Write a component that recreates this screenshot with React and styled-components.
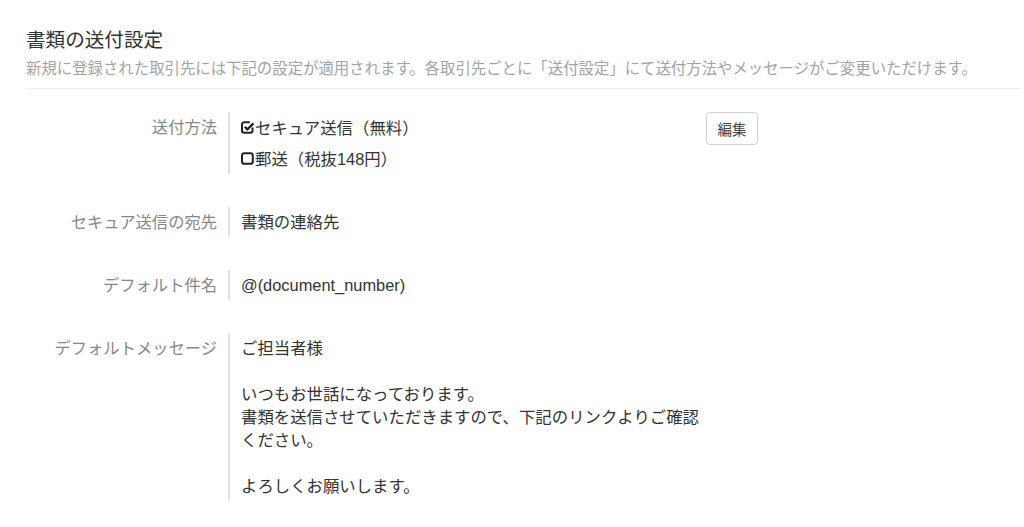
import React from "react";
import styled, { createGlobalStyle } from "styled-components";

const Global = createGlobalStyle`
  body {
    margin: 0;
    background: #fff;
    font-family: "Liberation Sans", "Noto Sans CJK JP", sans-serif;
    color: #333;
  }
`;

const Page = styled.div`
  padding: 28px 4px 0 26px;
`;

const Title = styled.div`
  font-size: 19.6px;
  line-height: 24px;
  color: #333;
`;

const Subtitle = styled.div`
  font-size: 15.4px;
  line-height: 22px;
  margin-top: 6px;
  color: #a3a3a3;
  white-space: nowrap;
`;

const Divider = styled.div`
  margin-top: 8px;
  border-top: 1px solid #ececec;
`;

const Rows = styled.div`
  display: flex;
  flex-direction: column;
  gap: 33px;
  margin-top: 23px;
`;

const Row = styled.div`
  display: grid;
  grid-template-columns: 204px 476px auto;
  align-items: start;
`;

const Label = styled.div`
  font-size: 16.3px;
  line-height: 30px;
  color: #888;
  text-align: right;
  padding-right: 11px;
  border-right: 2px solid #e2e2e2;
  height: ${(p) => p.$h}px;
  box-sizing: border-box;
  white-space: nowrap;
`;

const Content = styled.div`
  font-size: 16.4px;
  line-height: ${(p) => p.$lh || 30}px;
  padding: ${(p) => p.$pt || 0}px 0 0 11px;
  color: #333;
`;

const Option = styled.div`
  display: flex;
  align-items: center;
  height: 31px;
  gap: 1px;
`;

const Message = styled.div`
  white-space: pre;
`;

const EditButton = styled.button`
  width: 52px;
  height: 33px;
  border: 1px solid #d0d0d0;
  border-radius: 4px;
  background: #fff;
  font-family: "Liberation Sans", "Noto Sans CJK JP", sans-serif;
  font-size: 14.5px;
  color: #444;
  padding: 0;
  cursor: pointer;
`;

const CheckIcon = ({ checked }) => (
  <svg width="13" height="13" viewBox="0 0 13 13" fill="none">
    {checked ? (
      <>
        <path
          d="M11.5 6.5V9.6a2.2 2.2 0 0 1-2.2 2.2H3.2a2.2 2.2 0 0 1-2.2-2.2V3.4a2.2 2.2 0 0 1 2.2-2.2H8.8"
          stroke="#222"
          strokeWidth="2"
        />
        <path d="M3.8 5.8l2.6 2.6L12.4 2.4" stroke="#222" strokeWidth="2.3" />
      </>
    ) : (
      <rect
        x="1"
        y="1.2"
        width="10.8"
        height="10.6"
        rx="2.4"
        stroke="#222"
        strokeWidth="2"
      />
    )}
  </svg>
);

const message = `ご担当者様

いつもお世話になっております。
書類を送信させていただきますので、下記のリンクよりご確認
ください。

よろしくお願いします。`;

const App = () => (
  <Page>
    <Global />
    <Title>書類の送付設定</Title>
    <Subtitle>
      新規に登録された取引先には下記の設定が適用されます。各取引先ごとに「送付設定」にて送付方法やメッセージがご変更いただけます。
    </Subtitle>
    <Divider />
    <Rows>
      <Row>
        <Label $h={62}>送付方法</Label>
        <Content>
          <Option>
            <CheckIcon checked />
            セキュア送信（無料）
          </Option>
          <Option>
            <CheckIcon />
            郵送（税抜148円）
          </Option>
        </Content>
        <EditButton>編集</EditButton>
      </Row>
      <Row>
        <Label $h={30}>セキュア送信の宛先</Label>
        <Content>書類の連絡先</Content>
      </Row>
      <Row>
        <Label $h={30}>デフォルト件名</Label>
        <Content>@(document_number)</Content>
      </Row>
      <Row>
        <Label $h={168}>デフォルトメッセージ</Label>
        <Content $lh={23} $pt={4}>
          <Message>{message}</Message>
        </Content>
      </Row>
    </Rows>
  </Page>
);

export default App;
